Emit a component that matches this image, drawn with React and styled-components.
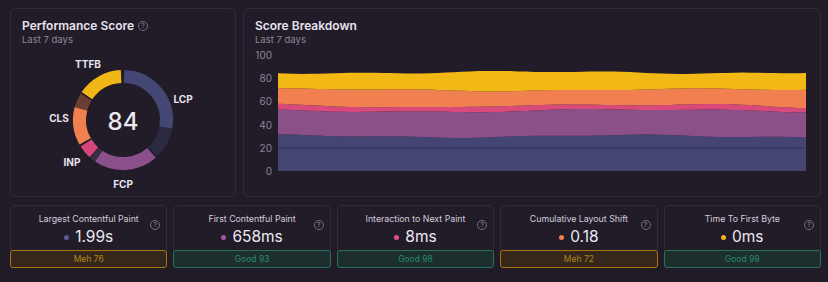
import styled, { createGlobalStyle } from "styled-components";

const GlobalStyle = createGlobalStyle`
  html, body {
    margin: 0;
    padding: 0;
    background: #211b28;
    font-family: Inter, "Noto Sans", sans-serif;
    color: #e8e3ee;
  }
`;

const metrics = [
  { name: "Largest Contentful Paint", value: "1.99s", dot: "#5a5c95", status: "meh", label: "Meh 76" },
  { name: "First Contentful Paint", value: "658ms", dot: "#a45a9f", status: "good", label: "Good 93" },
  { name: "Interaction to Next Paint", value: "8ms", dot: "#e0508a", status: "good", label: "Good 98" },
  { name: "Cumulative Layout Shift", value: "0.18", dot: "#f47f50", status: "meh", label: "Meh 72" },
  { name: "Time To First Byte", value: "0ms", dot: "#f5b51a", status: "good", label: "Good 99" },
];

const ringSegments = [
  { from: 1.5, to: 100, color: "#444674" },
  { from: 100, to: 137, color: "#2c2943" },
  { from: 139, to: 214, color: "#8b4f8b" },
  { from: 214, to: 221, color: "#3a2f46" },
  { from: 222, to: 238, color: "#d6467b" },
  { from: 240.5, to: 285, color: "#f0804f" },
  { from: 285, to: 302, color: "#6b3e33" },
  { from: 304, to: 357.5, color: "#f2b716" },
];

const ringLabels = [
  { text: "TTFB", dx: -35, dy: -56 },
  { text: "LCP", dx: 60, dy: -21 },
  { text: "CLS", dx: -64, dy: -2 },
  { text: "INP", dx: -51, dy: 42 },
  { text: "FCP", dx: 0, dy: 64 },
];

const layerColors = ["#444573", "#8b5088", "#d8497c", "#f0804f", "#f2b815"];

const polar = (cx, cy, r, deg) => {
  const a = ((deg - 90) * Math.PI) / 180;
  return [cx + r * Math.cos(a), cy + r * Math.sin(a)];
};

const arcPath = (cx, cy, r, from, to) => {
  const [x1, y1] = polar(cx, cy, r, from);
  const [x2, y2] = polar(cx, cy, r, to);
  const large = to - from > 180 ? 1 : 0;
  return `M${x1} ${y1} A${r} ${r} 0 ${large} 1 ${x2} ${y2}`;
};

// stacked boundaries, value 0-100
const bounds = (x) => {
  const b1 = 30 + 1.1 * Math.sin(x * 0.018 + 1) + 0.5 * Math.sin(x * 0.05);
  const b2 = 52 + 1.2 * Math.sin(x * 0.015 + 2) + 0.6 * Math.sin(x * 0.04 + 1);
  const b3 = b2 + 4.3 + 0.6 * Math.sin(x * 0.03);
  const b4 = 70 + 0.9 * Math.sin(x * 0.016 + 0.5) + 0.5 * Math.sin(x * 0.045);
  const b5 = 85 + 0.9 * Math.sin(x * 0.017 + 3) + 0.6 * Math.sin(x * 0.05 + 2);
  return [0, b1, b2, b3, b4, b5];
};

const X0 = 34;
const X1 = 562;
const toY = (v) => 123 - v * 1.16;

const buildAreas = () => {
  const pts = [];
  for (let i = 0; i <= 66; i++) {
    const x = X0 + ((X1 - X0) * i) / 66;
    pts.push({ x, b: bounds(x) });
  }
  return layerColors.map((color, k) => {
    const top = pts.map((p) => `${p.x.toFixed(1)},${toY(p.b[k + 1]).toFixed(1)}`);
    const bottom = pts
      .slice()
      .reverse()
      .map((p) => `${p.x.toFixed(1)},${toY(p.b[k]).toFixed(1)}`);
    return { color, d: `M${top.join(" L")} L${bottom.join(" L")} Z` };
  });
};

const HelpIcon = () => <Help>?</Help>;

const App = () => {
  const areas = buildAreas();
  const cx = 112;
  const cy = 72;
  return (
    <>
      <GlobalStyle />
      <Page>
        <TopRow>
          <ScoreCard>
            <Header>
              <Title>
                Performance Score <HelpIcon />
              </Title>
              <Subtitle>Last 7 days</Subtitle>
            </Header>
            <svg width="224" height="146" style={{ display: "block" }}>
              {ringSegments.map((s, i) => (
                <path
                  key={i}
                  d={arcPath(cx, cy, 43.5, s.from, s.to)}
                  stroke={s.color}
                  strokeWidth="13"
                  fill="none"
                />
              ))}
              <text
                x={cx}
                y={cy + 1}
                textAnchor="middle"
                dominantBaseline="central"
                fill="#ece8f0"
                fontSize="24"
                fontWeight="500"
                fontFamily="Inter, sans-serif"
              >
                84
              </text>
              {ringLabels.map((l) => (
                <text
                  key={l.text}
                  x={cx + l.dx}
                  y={cy + l.dy}
                  textAnchor="middle"
                  dominantBaseline="central"
                  fill="#e8e3ee"
                  fontSize="10"
                  fontWeight="700"
                  fontFamily="Inter, sans-serif"
                >
                  {l.text}
                </text>
              ))}
            </svg>
          </ScoreCard>
          <BreakdownCard>
            <Header>
              <Title>Score Breakdown</Title>
              <Subtitle>Last 7 days</Subtitle>
            </Header>
            <svg width="576" height="132" style={{ display: "block" }}>
              {[0, 20, 40, 60, 80, 100].map((v) => (
                <text
                  key={v}
                  x="28"
                  y={toY(v)}
                  textAnchor="end"
                  dominantBaseline="central"
                  fill="#8d8697"
                  fontSize="10"
                  fontFamily="Inter, sans-serif"
                >
                  {v}
                </text>
              ))}
              {areas.map((a, i) => (
                <path key={i} d={a.d} fill={a.color} />
              ))}
              <line x1={X0} x2={X1} y1={toY(20)} y2={toY(20)} stroke="#34345a" strokeWidth="1" />
            </svg>
          </BreakdownCard>
        </TopRow>
        <MetricRow>
          {metrics.map((m) => (
            <MetricCard key={m.name}>
              <MetricBody>
                <MetricName>{m.name}</MetricName>
                <MetricValue>
                  <Dot $color={m.dot} />
                  {m.value}
                </MetricValue>
                <CornerHelp>
                  <HelpIcon />
                </CornerHelp>
              </MetricBody>
              <Badge $status={m.status}>{m.label}</Badge>
            </MetricCard>
          ))}
        </MetricRow>
      </Page>
    </>
  );
};

const Page = styled.div`
  width: 828px;
  height: 282px;
  box-sizing: border-box;
  padding: 8px 7px 0 10px;
`;

const TopRow = styled.div`
  display: flex;
  gap: 7px;
  height: 189px;
`;

const Card = styled.div`
  box-sizing: border-box;
  border: 1px solid #322b3b;
  border-radius: 5px;
  background: #221c29;
`;

const ScoreCard = styled(Card)`
  width: 226px;
  flex: none;
`;

const BreakdownCard = styled(Card)`
  flex: 1;
`;

const Header = styled.div`
  padding: 9px 11px 2px;
`;

const Title = styled.div`
  display: flex;
  align-items: center;
  gap: 4px;
  font-size: 12px;
  line-height: 16px;
  font-weight: 600;
  color: #e8e3ee;
`;

const Subtitle = styled.div`
  font-size: 9.5px;
  line-height: 12px;
  color: #8d8697;
`;

const Help = styled.span`
  display: inline-flex;
  align-items: center;
  justify-content: center;
  width: 8px;
  height: 8px;
  border: 1px solid #756e80;
  border-radius: 50%;
  font-size: 6.5px;
  font-weight: 600;
  line-height: 1;
  color: #756e80;
`;

const MetricRow = styled.div`
  display: grid;
  grid-template-columns: repeat(5, 1fr);
  gap: 6px;
  margin-top: 8px;
`;

const MetricCard = styled(Card)`
  display: flex;
  flex-direction: column;
  height: 63px;
`;

const MetricBody = styled.div`
  position: relative;
  flex: 1;
  display: flex;
  flex-direction: column;
  align-items: center;
  padding-top: 7px;
`;

const MetricName = styled.div`
  font-size: 8.8px;
  line-height: 12px;
  color: #d3cdd9;
`;

const MetricValue = styled.div`
  display: flex;
  align-items: center;
  gap: 6px;
  margin-top: 2px;
  font-size: 15.5px;
  line-height: 20px;
  color: #ece8f0;
`;

const Dot = styled.span`
  width: 5px;
  height: 5px;
  border-radius: 50%;
  background: ${(p) => p.$color};
`;

const CornerHelp = styled.div`
  position: absolute;
  top: 5px;
  right: 6px;
`;

const Badge = styled.div`
  margin: 0 -1px -1px;
  height: 18px;
  box-sizing: border-box;
  display: flex;
  align-items: center;
  justify-content: center;
  border-radius: 3px;
  font-size: 8.5px;
  border: 1px solid ${(p) => (p.$status === "meh" ? "#a8750f" : "#26705d")};
  background: ${(p) => (p.$status === "meh" ? "#36271c" : "#1d2f2d")};
  color: ${(p) => (p.$status === "meh" ? "#b3861a" : "#278a6e")};
`;

export default App;
